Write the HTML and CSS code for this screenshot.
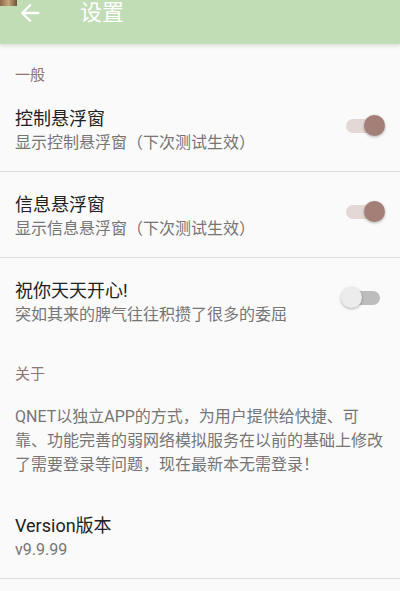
FILE: index.html
```html
<!DOCTYPE html>
<html lang="zh-CN">
<head>
  <meta charset="UTF-8">
  <meta name="viewport" content="width=device-width, initial-scale=1.0">
  <title>设置</title>
  <link rel="stylesheet" href="styles.css">
</head>
<body>
  <!-- Status icon peeking over the bar -->
  <span class="status-icon"></span>

  <!-- Toolbar -->
  <header class="toolbar">
    <svg class="back" viewBox="0 0 24 24" width="28" height="28">
      <path d="M20 11H7.83l5.59-5.59L12 4l-8 8 8 8 1.41-1.41L7.83 13H20v-2z" fill="#fff"/>
    </svg>
    <h1>设置</h1>
  </header>

  <!-- General -->
  <div class="category">一般</div>

  <div class="pref divider">
    <div class="pref-text">
      <div class="pref-title">控制悬浮窗</div>
      <div class="pref-summary">显示控制悬浮窗（下次测试生效）</div>
    </div>
    <span class="switch on"><span class="thumb"></span></span>
  </div>

  <div class="pref divider">
    <div class="pref-text">
      <div class="pref-title">信息悬浮窗</div>
      <div class="pref-summary">显示信息悬浮窗（下次测试生效）</div>
    </div>
    <span class="switch on"><span class="thumb"></span></span>
  </div>

  <div class="pref">
    <div class="pref-text">
      <div class="pref-title">祝你天天开心!</div>
      <div class="pref-summary">突如其来的脾气往往积攒了很多的委屈</div>
    </div>
    <span class="switch"><span class="thumb"></span></span>
  </div>

  <!-- About -->
  <div class="category">关于</div>

  <p class="about">QNET以独立APP的方式，为用户提供给快捷、可靠、功能完善的弱网络模拟服务在以前的基础上修改了需要登录等问题，现在最新本无需登录！</p>

  <div class="pref divider">
    <div class="pref-text">
      <div class="pref-title">Version版本</div>
      <div class="pref-summary">v9.9.99</div>
    </div>
  </div>
</body>
</html>
```

FILE: styles.css
```css
* {
  margin: 0;
  padding: 0;
  box-sizing: border-box;
}

body {
  font-family: Roboto, "Noto Sans CJK SC", sans-serif;
  background: #fafafa;
  color: #212121;
  width: 400px;
  min-height: 591px;
  position: relative;
}

.status-icon {
  position: absolute;
  top: 0;
  left: 0;
  width: 17px;
  height: 6px;
  background: linear-gradient(90deg, #8a6a48, #c7a57a 50%, #6e5137);
  z-index: 2;
}

/* Toolbar */
.toolbar {
  height: 44px;
  background: #c1ddb6;
  display: flex;
  align-items: center;
  padding: 0 0 18px 16px;
  box-shadow: 0 2px 4px rgba(0, 0, 0, 0.12);
  position: relative;
  z-index: 1;
}

.back {
  flex-shrink: 0;
}

.toolbar h1 {
  margin-left: 36px;
  font-size: 22px;
  font-weight: 400;
  line-height: 26px;
  color: #fff;
}

/* Category header */
.category {
  padding: 20px 15px 0;
  font-size: 15px;
  line-height: 22px;
  color: #8d7672;
}

/* Preference rows */
.pref {
  display: flex;
  align-items: center;
  padding: 20px 15px 17px;
}

.pref.divider {
  border-bottom: 1px solid #dedede;
}

.pref-text {
  flex: 1;
}

.pref-title {
  font-size: 18px;
  line-height: 26px;
}

.pref-summary {
  font-size: 16px;
  line-height: 22px;
  color: #757575;
}

/* Switch */
.switch {
  position: relative;
  width: 34px;
  height: 14px;
  border-radius: 7px;
  background: #bdbdbd;
  margin: 0 5px 8px 0;
}

.switch .thumb {
  position: absolute;
  top: -4px;
  left: -5px;
  width: 21px;
  height: 21px;
  border-radius: 50%;
  background: #ececec;
  box-shadow: 0 1px 3px rgba(0, 0, 0, 0.3);
}

.switch.on {
  background: #e3d8d6;
}

.switch.on .thumb {
  left: 18px;
  background: #a47f78;
}

/* About text */
.about {
  padding: 20px 15px 16px;
  font-size: 16px;
  line-height: 24px;
  color: #757575;
}
```
